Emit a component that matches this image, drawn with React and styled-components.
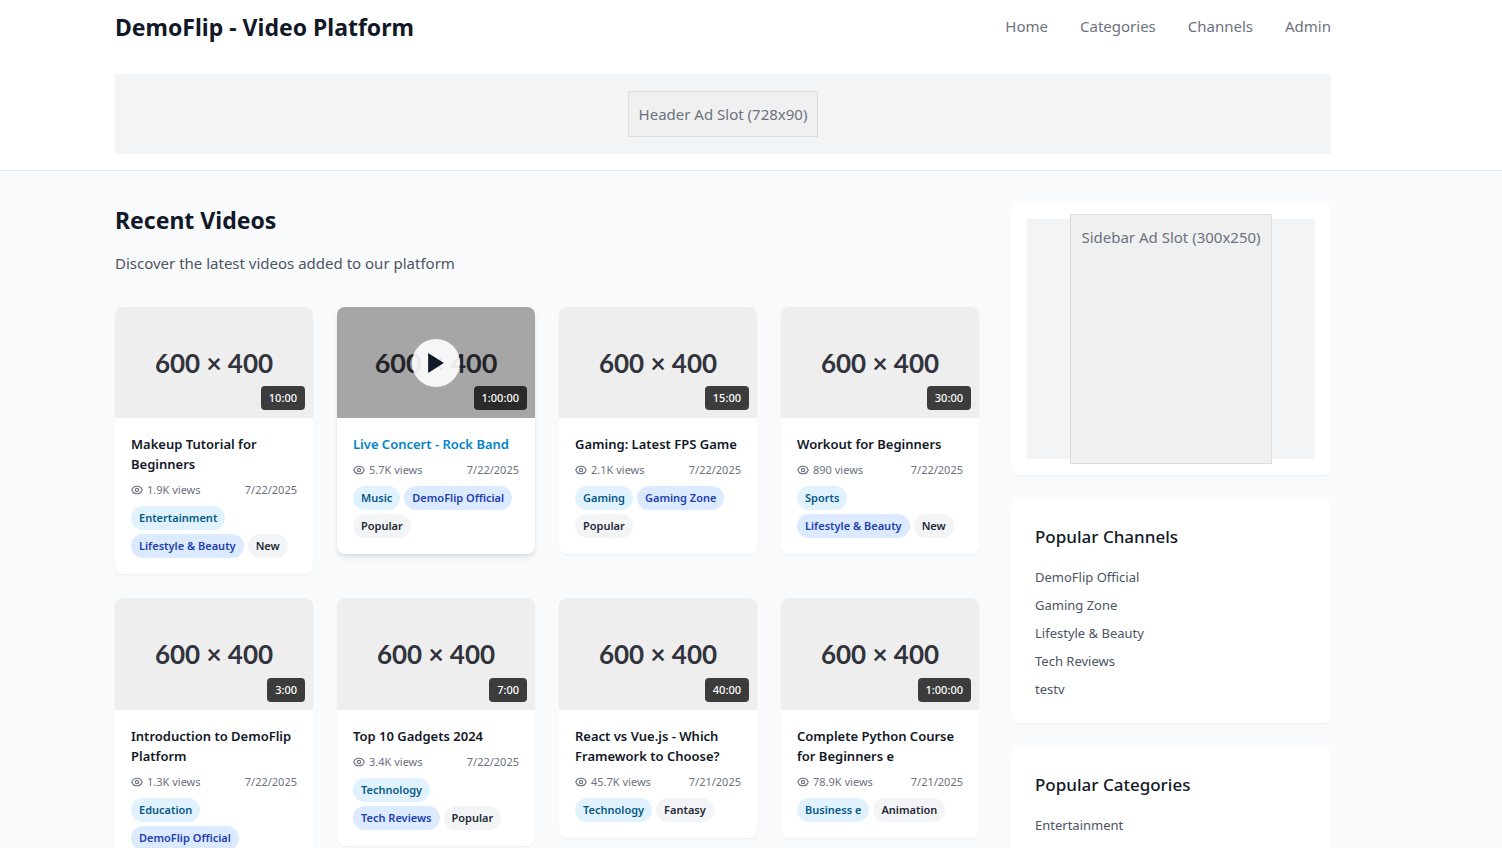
import React from 'react';
import styled, { createGlobalStyle, css } from 'styled-components';

const GlobalStyle = createGlobalStyle`
  *, *::before, *::after { box-sizing: border-box; }
  body {
    margin: 0;
    background: #f9fafb;
    color: #111827;
    font-family: 'Segoe UI', 'Noto Sans', 'Open Sans', sans-serif;
    font-size: 15px;
    line-height: 24px;
  }
  h1, h2, h3, p, ul { margin: 0; padding: 0; }
  ul { list-style: none; }
  a { color: inherit; text-decoration: none; }
`;

const Gutter = styled.div`
  padding-right: 56px;
`;

const Container = styled.div`
  max-width: 1280px;
  margin: 0 auto;
  padding: 0 32px;
`;

const Header = styled.header`
  background: #fff;
  border-bottom: 1px solid #e5e7eb;
  padding: 10px 0 16px;
`;

const TopBar = styled.div`
  display: flex;
  align-items: flex-start;
  justify-content: space-between;
  margin-bottom: 30px;
`;

const Brand = styled.h1`
  font-size: 23px;
  line-height: 34px;
  font-weight: 700;
`;

const Nav = styled.nav`
  display: flex;
  gap: 32px;
  line-height: 32px;
`;

const NavLink = styled.a`
  color: #6b7280;
`;

const AdSlot = styled.div`
  display: flex;
  align-items: center;
  justify-content: center;
  height: ${(p) => p.$height}px;
  background: #f3f4f6;
  color: #6b7280;
`;

const AdBox = styled.div`
  flex: none;
  min-height: ${(p) => p.$height}px;
  padding: 10px;
  background: #f0f0f0;
  border: 1px solid #ddd;
`;

const Columns = styled.div`
  display: flex;
  align-items: flex-start;
  gap: 32px;
  padding-top: 32px;
  padding-bottom: 32px;
`;

const Main = styled.main`
  flex: 1;
  min-width: 0;
`;

const PageTitle = styled.h2`
  font-size: 23px;
  line-height: 34px;
  font-weight: 700;
  margin-bottom: 14px;
`;

const Intro = styled.p`
  color: #4b5563;
  margin-bottom: 32px;
`;

const VideoGrid = styled.div`
  display: grid;
  grid-template-columns: repeat(4, minmax(0, 1fr));
  gap: 24px;
  align-items: start;
`;

const Card = styled.article`
  background: #fff;
  border-radius: 8px;
  overflow: hidden;
  box-shadow: ${(p) =>
    p.$active
      ? '0 4px 6px -1px rgba(0, 0, 0, 0.1), 0 2px 4px -2px rgba(0, 0, 0, 0.1)'
      : '0 1px 2px 0 rgba(0, 0, 0, 0.05)'};
`;

const Thumb = styled.div`
  position: relative;
  aspect-ratio: 16 / 9;
  display: flex;
  align-items: center;
  justify-content: center;
  background: #eee;
  color: #31343c;
  font-family: Lato, sans-serif;
  font-weight: 700;
  font-size: ${(p) => (p.$active ? 27 : 26)}px;
`;

const Duration = styled.span`
  position: absolute;
  right: 8px;
  bottom: 8px;
  padding: 4px 8px;
  border-radius: 4px;
  background: rgba(0, 0, 0, 0.75);
  color: #fff;
  font-family: 'Segoe UI', 'Noto Sans', 'Open Sans', sans-serif;
  font-size: 11px;
  line-height: 16px;
  font-weight: 500;
`;

const Shade = styled.div`
  position: absolute;
  inset: 0;
  display: flex;
  align-items: center;
  justify-content: center;
  background: rgba(0, 0, 0, 0.3);
`;

const PlayButton = styled.button`
  display: flex;
  align-items: center;
  justify-content: center;
  width: 48px;
  height: 48px;
  padding: 0;
  border: 0;
  border-radius: 50%;
  background: rgba(255, 255, 255, 0.9);
  color: #111827;
`;

const CardBody = styled.div`
  padding: 16px;
`;

const VideoTitle = styled.h3`
  margin-bottom: 8px;
  font-size: 13px;
  line-height: 20px;
  font-weight: 600;
  ${(p) => p.$active && css`color: #0284c7;`}
`;

const Meta = styled.div`
  display: flex;
  align-items: center;
  justify-content: space-between;
  margin-bottom: 8px;
  color: #6b7280;
  font-size: 11px;
  line-height: 16px;
`;

const Views = styled.span`
  display: flex;
  align-items: center;
  gap: 4px;
`;

const Tags = styled.div`
  display: flex;
  flex-wrap: wrap;
  gap: 4px;
`;

const tagColors = {
  category: ['#e0f2fe', '#075985'],
  channel: ['#dbeafe', '#1e40af'],
  label: ['#f3f4f6', '#1f2937'],
};

const Tag = styled.a`
  padding: 4px 8px;
  border-radius: 12px;
  background: ${(p) => tagColors[p.$kind][0]};
  color: ${(p) => tagColors[p.$kind][1]};
  font-size: 11px;
  line-height: 16px;
  font-weight: 600;
`;

const Sidebar = styled.aside`
  flex: none;
  width: 320px;
  display: flex;
  flex-direction: column;
  gap: 24px;
`;

const Panel = styled.section`
  padding: ${(p) => (p.$tight ? 16 : 24)}px;
  background: #fff;
  border-radius: 8px;
  box-shadow: 0 1px 2px 0 rgba(0, 0, 0, 0.05);
`;

const PanelTitle = styled.h3`
  margin-bottom: 16px;
  font-size: 17px;
  line-height: 28px;
  font-weight: 500;
`;

const LinkList = styled.ul`
  display: flex;
  flex-direction: column;
  gap: 8px;
  color: #4b5563;
  font-size: 13px;
  line-height: 20px;
`;

const EyeIcon = () => (
  <svg width="12" height="12" viewBox="1 1 22 22" fill="none" stroke="currentColor" strokeWidth="2" strokeLinecap="round" strokeLinejoin="round" aria-hidden="true">
    <path d="M15 12a3 3 0 11-6 0 3 3 0 016 0z" />
    <path d="M2.458 12C3.732 7.943 7.523 5 12 5c4.478 0 8.268 2.943 9.542 7-1.274 4.057-5.064 7-9.542 7-4.477 0-8.268-2.943-9.542-7z" />
  </svg>
);

const PlayIcon = () => (
  <svg width="16" height="20" viewBox="8 5 11 14" fill="currentColor" aria-hidden="true">
    <path d="M8 5v14l11-7z" />
  </svg>
);

const videos = [
  { title: 'Makeup Tutorial for Beginners', time: '10:00', views: '1.9K', date: '7/22/2025', tags: [['category', 'Entertainment'], ['channel', 'Lifestyle & Beauty'], ['label', 'New']] },
  { title: 'Live Concert - Rock Band', time: '1:00:00', views: '5.7K', date: '7/22/2025', active: true, tags: [['category', 'Music'], ['channel', 'DemoFlip Official'], ['label', 'Popular']] },
  { title: 'Gaming: Latest FPS Game', time: '15:00', views: '2.1K', date: '7/22/2025', tags: [['category', 'Gaming'], ['channel', 'Gaming Zone'], ['label', 'Popular']] },
  { title: 'Workout for Beginners', time: '30:00', views: '890', date: '7/22/2025', tags: [['category', 'Sports'], ['channel', 'Lifestyle & Beauty'], ['label', 'New']] },
  { title: 'Introduction to DemoFlip Platform', time: '3:00', views: '1.3K', date: '7/22/2025', tags: [['category', 'Education'], ['channel', 'DemoFlip Official']] },
  { title: 'Top 10 Gadgets 2024', time: '7:00', views: '3.4K', date: '7/22/2025', tags: [['category', 'Technology'], ['channel', 'Tech Reviews'], ['label', 'Popular']] },
  { title: 'React vs Vue.js - Which Framework to Choose?', time: '40:00', views: '45.7K', date: '7/21/2025', tags: [['category', 'Technology'], ['label', 'Fantasy']] },
  { title: 'Complete Python Course for Beginners e', time: '1:00:00', views: '78.9K', date: '7/21/2025', tags: [['category', 'Business e'], ['label', 'Animation']] },
];

const navItems = ['Home', 'Categories', 'Channels', 'Admin'];
const channels = ['DemoFlip Official', 'Gaming Zone', 'Lifestyle & Beauty', 'Tech Reviews', 'testv'];
const categories = ['Entertainment'];

function VideoCard({ video }) {
  return (
    <Card $active={video.active}>
      <Thumb $active={video.active}>
        600 × 400
        {video.active && (
          <Shade>
            <PlayButton type="button" aria-label={`Play ${video.title}`}>
              <PlayIcon />
            </PlayButton>
          </Shade>
        )}
        <Duration>{video.time}</Duration>
      </Thumb>
      <CardBody>
        <VideoTitle $active={video.active}>
          <a href="#video">{video.title}</a>
        </VideoTitle>
        <Meta>
          <Views>
            <EyeIcon />
            {video.views} views
          </Views>
          <span>{video.date}</span>
        </Meta>
        <Tags>
          {video.tags.map(([kind, name]) => (
            <Tag key={name} href="#tag" $kind={kind}>{name}</Tag>
          ))}
        </Tags>
      </CardBody>
    </Card>
  );
}

function LinkPanel({ title, links }) {
  return (
    <Panel>
      <PanelTitle>{title}</PanelTitle>
      <LinkList>
        {links.map((name) => (
          <li key={name}><a href="#list">{name}</a></li>
        ))}
      </LinkList>
    </Panel>
  );
}

export default function App() {
  return (
    <>
      <GlobalStyle />
      <Header>
        <Gutter>
          <Container>
            <TopBar>
              <Brand>DemoFlip - Video Platform</Brand>
              <Nav>
                {navItems.map((name) => (
                  <NavLink key={name} href="#nav">{name}</NavLink>
                ))}
              </Nav>
            </TopBar>
            <AdSlot $height={80}>
              <AdBox $height={46}>Header Ad Slot (728x90)</AdBox>
            </AdSlot>
          </Container>
        </Gutter>
      </Header>
      <Gutter>
        <Container>
          <Columns>
            <Main>
              <PageTitle>Recent Videos</PageTitle>
              <Intro>Discover the latest videos added to our platform</Intro>
              <VideoGrid>
                {videos.map((video) => (
                  <VideoCard key={video.title} video={video} />
                ))}
              </VideoGrid>
            </Main>
            <Sidebar>
              <Panel $tight>
                <AdSlot $height={240}>
                  <AdBox $height={250}>Sidebar Ad Slot (300x250)</AdBox>
                </AdSlot>
              </Panel>
              <LinkPanel title="Popular Channels" links={channels} />
              <LinkPanel title="Popular Categories" links={categories} />
            </Sidebar>
          </Columns>
        </Container>
      </Gutter>
    </>
  );
}
